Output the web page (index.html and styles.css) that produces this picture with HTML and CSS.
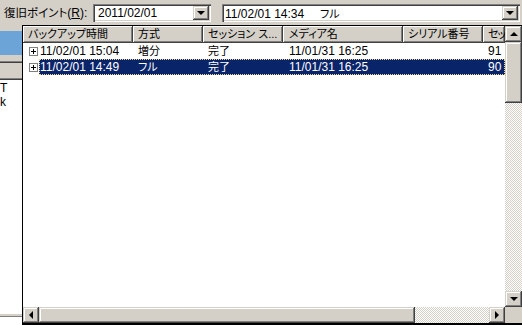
FILE: index.html
```html
<!DOCTYPE html>
<html lang="ja">
<head>
    <meta charset="UTF-8">
    <meta name="viewport" content="width=device-width, initial-scale=1.0">
    <title>復旧ポイント</title>
    <link rel="stylesheet" href="styles.css">
</head>
<body>
    <div class="window">
        <div class="toolbar">
            <span class="tb-label"><span class="ja-label">復旧ポイント</span>(<u>R</u>):</span>
            <div class="combo combo-date">
                <span class="combo-text">2011/02/01</span>
                <span class="combo-btn raised"><span class="arrow arrow-down"></span></span>
            </div>
            <div class="combo combo-point">
                <span class="combo-text">11/02/01 14:34<span class="combo-type ja">フル</span></span>
                <span class="combo-btn raised"><span class="arrow arrow-down"></span></span>
            </div>
        </div>

        <div class="main">
            <div class="side">
                <div class="side-title"></div>
                <div class="side-btn side-btn-short"></div>
                <div class="side-btn"></div>
                <div class="side-body">
                    <div class="side-items">
                        <div>T</div>
                        <div>k</div>
                    </div>
                    <div class="side-rule"></div>
                </div>
            </div>

            <div class="listbox">
                <div class="list-view">
                    <div class="list-head">
                        <div class="hcell col-time">バックアップ時間</div>
                        <div class="hcell col-kind">方式</div>
                        <div class="hcell col-state">セッション ス...</div>
                        <div class="hcell col-media">メディア名</div>
                        <div class="hcell col-serial">シリアル番号</div>
                        <div class="hcell col-session">セッ</div>
                    </div>

                    <div class="list-row">
                        <span class="expander">
                            <svg width="9" height="9" viewBox="0 0 9 9"><rect x="0.5" y="0.5" width="8" height="8" fill="#fff" stroke="#808080"/><path d="M2 4.5h5M4.5 2v5" stroke="#000"/></svg>
                        </span>
                        <div class="row-main">
                            <div class="cell col-time-text">11/02/01 15:04</div>
                            <div class="cell col-kind ja">増分</div>
                            <div class="cell col-state ja">完了</div>
                            <div class="cell col-media">11/01/31 16:25</div>
                            <div class="cell col-serial"></div>
                            <div class="cell col-session">91</div>
                        </div>
                    </div>

                    <div class="list-row selected">
                        <span class="expander">
                            <svg width="9" height="9" viewBox="0 0 9 9"><rect x="0.5" y="0.5" width="8" height="8" fill="#fff" stroke="#808080"/><path d="M2 4.5h5M4.5 2v5" stroke="#000"/></svg>
                        </span>
                        <div class="row-main">
                            <div class="cell col-time-text">11/02/01 14:49</div>
                            <div class="cell col-kind ja">フル</div>
                            <div class="cell col-state ja">完了</div>
                            <div class="cell col-media">11/01/31 16:25</div>
                            <div class="cell col-serial"></div>
                            <div class="cell col-session">90</div>
                        </div>
                    </div>
                </div>

                <div class="vscroll">
                    <div class="sb-btn raised"><span class="arrow arrow-up"></span></div>
                    <div class="sb-thumb-v raised"></div>
                    <div class="sb-track"></div>
                    <div class="sb-btn raised"><span class="arrow arrow-down"></span></div>
                </div>

                <div class="hscroll">
                    <div class="sb-btn raised"><span class="arrow arrow-left"></span></div>
                    <div class="sb-thumb-h raised"></div>
                    <div class="sb-track"></div>
                    <div class="sb-btn raised"><span class="arrow arrow-right"></span></div>
                </div>

                <div class="sb-corner"></div>
            </div>
        </div>
    </div>
</body>
</html>
```

FILE: styles.css
```css
* {
    margin: 0;
    padding: 0;
    box-sizing: border-box;
}

body {
    font-family: 'Liberation Sans', 'Noto Sans CJK JP', sans-serif;
    font-size: 12px;
    color: #000;
    background: #d4d0c8;
    overflow: hidden;
}

.window {
    width: 522px;
    height: 325px;
    display: flex;
    flex-direction: column;
}

/* japanese text is narrower in the original ui font */
.ja {
    font-size: 11px;
    font-feature-settings: "palt";
}

/* 3D button face */
.raised {
    background: #d4d0c8;
    box-shadow: inset -1px -1px #404040, inset 1px 1px #d4d0c8, inset -2px -2px #808080, inset 2px 2px #fff;
}

.arrow {
    width: 0;
    height: 0;
    border-style: solid;
    border-color: transparent;
}

.arrow-down {
    border-width: 4px 4px 0 4px;
    border-top-color: #000;
}

.arrow-up {
    border-width: 0 4px 4px 4px;
    border-bottom-color: #000;
}

.arrow-left {
    border-width: 4px 4px 4px 0;
    border-right-color: #000;
}

.arrow-right {
    border-width: 4px 0 4px 4px;
    border-left-color: #000;
}

.toolbar {
    height: 25px;
    display: flex;
    align-items: flex-start;
    padding: 4px 0 0 4px;
}

.tb-label {
    width: 89px;
    line-height: 18px;
    white-space: nowrap;
}

.ja-label {
    font-size: 11.5px;
    font-feature-settings: "palt";
}

.combo {
    height: 18px;
    display: flex;
    align-items: center;
    background: #fff;
    box-shadow: inset 1px 1px #808080, inset 2px 2px #404040, inset -1px -1px #fff, inset -2px -2px #d4d0c8;
}

.combo-date {
    width: 118px;
    padding-left: 5px;
}

.combo-point {
    width: 298px;
    margin-left: 11px;
    padding-left: 3px;
}

.combo-text {
    flex: 1;
    white-space: nowrap;
}

.combo-type {
    margin-left: 16px;
}

.combo-btn {
    width: 16px;
    height: 14px;
    margin-right: 2px;
    display: flex;
    align-items: center;
    justify-content: center;
}

.main {
    flex: 1;
    display: flex;
}

.side {
    width: 22px;
    display: flex;
    flex-direction: column;
    padding-top: 6px;
    overflow: hidden;
}

.side-title {
    height: 24px;
    background: #6ca4d8;
}

.side-btn {
    height: 17px;
    box-shadow: inset 0 -1px #404040, inset 0 -2px #808080;
}

.side-btn-short {
    height: 8px;
}

.side-body {
    flex: 1;
    display: flex;
    flex-direction: column;
    background: #fff;
}

.side-items {
    flex: 1;
    padding-top: 1px;
    line-height: 14px;
}

.side-rule {
    height: 3px;
    border-top: 2px solid #d4d0c8;
    border-bottom: 1px solid #808080;
    margin-bottom: 8px;
}

.listbox {
    width: 500px;
    border-left: 1px solid #000;
    border-top: 1px solid #000;
    border-bottom: 2px solid #000;
    background: #fff;
    display: grid;
    grid-template-columns: 1fr 17px;
    grid-template-rows: 1fr 16px;
}

.list-view {
    overflow: hidden;
}

.list-head {
    display: flex;
    height: 17px;
}

.hcell {
    height: 17px;
    line-height: 16px;
    padding-left: 5px;
    font-size: 11px;
    font-feature-settings: "palt";
    white-space: nowrap;
    overflow: hidden;
    background: #d4d0c8;
    box-shadow: inset -1px -1px #404040, inset 1px 1px #fff, inset -2px -2px #808080;
}

.col-time { width: 110px; }
.col-time-text { width: 94px; }
.col-kind { width: 70px; }
.col-state { width: 80px; }
.col-media { width: 120px; padding-left: 6px; }
.col-serial { width: 80px; }
.col-session { flex: 1; }

.hcell.col-session {
    letter-spacing: -1px;
}

.list-row {
    display: flex;
    height: 16px;
}

.expander {
    width: 16px;
    display: flex;
    align-items: center;
    padding-left: 6px;
}

.expander svg {
    display: block;
}

.row-main {
    flex: 1;
    display: flex;
}

.cell {
    line-height: 16px;
    padding-left: 5px;
    white-space: nowrap;
    overflow: hidden;
}

.cell.col-time-text {
    padding-left: 1px;
}

.cell.col-media {
    padding-left: 6px;
}

.selected .row-main {
    background: #0a246a;
    color: #fff;
    outline: 1px dotted #f0d890;
    outline-offset: -1px;
}

.vscroll {
    display: flex;
    flex-direction: column;
}

.hscroll {
    display: flex;
}

.sb-btn {
    width: 17px;
    height: 16px;
    flex-shrink: 0;
    display: flex;
    align-items: center;
    justify-content: center;
}

.hscroll .sb-btn {
    width: 16px;
}

.sb-thumb-v {
    height: 61px;
}

.sb-thumb-h {
    width: 376px;
}

.sb-track {
    flex: 1;
    background-image: repeating-conic-gradient(#fff 0 25%, #d4d0c8 0 50%);
    background-size: 2px 2px;
}

.sb-corner {
    background: #d4d0c8;
}
```
